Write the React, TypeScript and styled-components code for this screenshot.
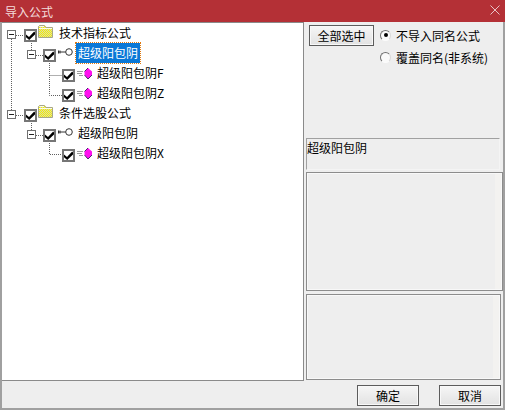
import React from 'react';
import styled, { createGlobalStyle } from 'styled-components';

const GlobalStyle = createGlobalStyle`
  html, body {
    margin: 0;
    padding: 0;
    width: 505px;
    height: 410px;
    overflow: hidden;
    background: #eeeeee;
    font-family: "Noto Sans CJK SC", "Liberation Sans", sans-serif;
    font-size: 12px;
    color: #000;
  }
`;

const Window = styled.div`
  width: 505px;
  height: 410px;
  display: flex;
  flex-direction: column;
  box-sizing: border-box;
  border-left: 2px solid #a0a0a0;
  border-right: 2px solid #a0a0a0;
  border-bottom: 2px solid #a0a0a0;
  background: #eeeeee;
`;

const TitleBar = styled.div`
  height: 22px;
  margin: 0 -2px;
  padding: 0 5px;
  display: flex;
  align-items: center;
  justify-content: space-between;
  background: #b43036;
  color: #f3dcdc;
  font-size: 12px;
  flex: none;
`;

const CloseGlyph = styled.svg`
  margin-top: -2px;
`;

const Body = styled.div`
  flex: 1;
  display: flex;
  flex-direction: column;
  min-height: 0;
`;

const Main = styled.div`
  height: 359px;
  display: flex;
  gap: 2px;
  flex: none;
`;

const TreePanel = styled.div`
  position: relative;
  width: 302px;
  box-sizing: border-box;
  background: #ffffff;
  border: 1px solid #8a8a8a;
  border-left: none;
  padding-top: 3px;
  flex: none;
`;

const Lines = styled.svg`
  position: absolute;
  left: 0;
  top: 0;
  pointer-events: none;
`;

const Row = styled.div<{ $level: number }>`
  position: relative;
  height: 20px;
  display: flex;
  align-items: flex-start;
  padding-left: ${(p) => p.$level * 19 + 22}px;
`;

const Expander = styled.span<{ $level: number }>`
  position: absolute;
  left: ${(p) => p.$level * 20 + 5}px;
  top: 4px;
  width: 9px;
  height: 9px;
  box-sizing: border-box;
  border: 1px solid #707070;
  background: #fff;
  display: flex;
  align-items: center;
  justify-content: center;
  &::after {
    content: '';
    width: 5px;
    height: 1px;
    background: #222;
  }
`;

const Check = styled.span`
  width: 13px;
  height: 13px;
  margin-top: 3px;
  box-sizing: border-box;
  border: 2px solid #767676;
  background: #fff;
  display: flex;
  align-items: center;
  justify-content: center;
  flex: none;
`;

const FolderSvg = styled.svg`
  flex: none;
  margin-left: 1px;
  margin-top: -1px;
`;

const KeySvg = styled.svg`
  flex: none;
  margin-left: 2px;
  margin-top: 2px;
`;

const FormulaSvg = styled.svg`
  flex: none;
  margin-left: 2px;
  margin-top: 2px;
`;

const Label = styled.span<{ $selected?: boolean; $gap: number }>`
  margin-left: ${(p) => p.$gap}px;
  margin-top: -3px;
  padding: 0 2px;
  height: 20px;
  line-height: 19px;
  box-sizing: border-box;
  white-space: nowrap;
  ${(p) =>
    p.$selected
      ? `background: #0a78d7; color: #fff; outline: 1px dotted #e07a10; outline-offset: 0;`
      : ''}
`;

const Side = styled.div`
  flex: 1;
  display: flex;
  flex-direction: column;
  min-width: 0;
`;

const TopControls = styled.div`
  height: 116px;
  padding: 3px 0 0 3px;
  box-sizing: border-box;
  display: flex;
  gap: 6px;
  flex: none;
`;

const PushButton = styled.button<{ $w: number }>`
  width: ${(p) => p.$w}px;
  height: 21px;
  padding: 0;
  box-sizing: border-box;
  border: 1px solid #5c5c5c;
  box-shadow: inset 0 0 0 1px #f8f8f8;
  background: linear-gradient(#f6f6f6, #e2e2e2);
  font: inherit;
  color: #000;
  flex: none;
`;

const RadioGroup = styled.div`
  display: flex;
  flex-direction: column;
  gap: 2px;
`;

const RadioRow = styled.div`
  height: 20px;
  display: flex;
  align-items: center;
  gap: 5px;
  white-space: nowrap;
`;

const RadioDot = styled.span<{ $on?: boolean }>`
  width: 11px;
  height: 11px;
  border-radius: 50%;
  box-sizing: border-box;
  border: 1px solid;
  border-color: #707070 #d8d8d8 #fbfbfb #707070;
  background: #fafafa;
  display: flex;
  align-items: center;
  justify-content: center;
  &::after {
    content: '';
    width: 4px;
    height: 4px;
    border-radius: 50%;
    background: ${(p) => (p.$on ? '#000' : 'transparent')};
  }
`;

const NamePanel = styled.div`
  height: 32px;
  margin-right: 3px;
  box-sizing: border-box;
  border: 1px solid #a0a0a0;
  border-bottom-color: #f4f4f4;
  border-right-color: #f4f4f4;
  line-height: 18px;
  flex: none;
`;

const GroupPanel = styled.div<{ $h: number; $mt: number; $mr: number }>`
  height: ${(p) => p.$h}px;
  margin-top: ${(p) => p.$mt}px;
  margin-right: ${(p) => p.$mr}px;
  box-sizing: border-box;
  border: 1px solid #8c8c8c;
  box-shadow: inset 0 0 0 1px #f8f8f8;
  background: linear-gradient(90deg, #eeeeee 0 96.5%, #f3f2f0 96.5%);
  flex: none;
`;

const Footer = styled.div`
  flex: 1;
  display: flex;
  justify-content: flex-end;
  align-items: flex-start;
  gap: 20px;
  padding: 4px 2px 0 0;
`;

const CheckMark = () => (
  <svg width="9" height="9" viewBox="0 0 9 9">
    <path d="M0 3.6 L3 6 L8.2 0.6 L9 1.4 V3.4 L3.2 9 L0 6.2 Z" fill="#000" />
  </svg>
);

const FolderIcon = () => (
  <FolderSvg width="15" height="13" viewBox="0 0 15 13">
    <defs>
      <pattern id="dither" width="2" height="2" patternUnits="userSpaceOnUse">
        <rect width="2" height="2" fill="#f6f000" />
        <rect width="1" height="1" fill="#d8d8b0" />
        <rect x="1" y="1" width="1" height="1" fill="#d8d8b0" />
      </pattern>
    </defs>
    <path d="M0.5 12.5 V1.5 L1.5 0.5 H6.5 L8 2.5 H14.5 V12.5 Z" fill="url(#dither)" stroke="#a8a888" />
    <path d="M1.5 1.5 H6 M1 3.5 H14" stroke="#fdfde8" />
  </FolderSvg>
);

const KeyIcon = () => (
  <KeySvg width="15" height="8" viewBox="0 0 15 8">
    <path d="M0.5 2.5 V5.5 M2 2.5 V5.5 M1 4 H8" stroke="#333" strokeWidth="1" fill="none" />
    <circle cx="11" cy="4" r="3.3" fill="#fff" stroke="#333" />
  </KeySvg>
);

const FormulaIcon = () => (
  <FormulaSvg width="15" height="11" viewBox="0 0 15 11">
    <path d="M0 3.5 H6 M0 5.5 H5 M2 7.5 H6" stroke="#9a9a9a" strokeWidth="1" fill="none" />
    <path d="M11 0 L15 3.5 V7 L11 11 L7.5 7 V3.5 Z" fill="#ff10f0" />
    <path d="M7.5 7 L11 11 L15 7 M11 0 L7.5 3.5" stroke="#4a2a70" strokeWidth="1" fill="none" />
  </FormulaSvg>
);

type TreeNode = {
  level: number;
  kind: 'folder' | 'key' | 'formula';
  text: string;
  selected?: boolean;
};

const nodes: TreeNode[] = [
  { level: 0, kind: 'folder', text: '技术指标公式' },
  { level: 1, kind: 'key', text: '超级阳包阴', selected: true },
  { level: 2, kind: 'formula', text: '超级阳包阴F' },
  { level: 2, kind: 'formula', text: '超级阳包阴Z' },
  { level: 0, kind: 'folder', text: '条件选股公式' },
  { level: 1, kind: 'key', text: '超级阳包阴' },
  { level: 2, kind: 'formula', text: '超级阳包阴X' },
];

const gaps = { folder: 4, key: 3, formula: 3 };

const App: React.FC = () => {
  return (
    <>
      <GlobalStyle />
      <Window>
        <TitleBar>
          <span>导入公式</span>
          <CloseGlyph width="10" height="10" viewBox="0 0 10 10">
            <path d="M0.5 0.5 L9.5 9.5 M9.5 0.5 L0.5 9.5" stroke="#e8c4c6" strokeWidth="1" />
          </CloseGlyph>
        </TitleBar>
        <Body>
          <Main>
            <TreePanel>
              <Lines width="160" height="160">
                <path
                  d="M9.5 16 V87 M14 12.5 H22 M14 92.5 H22 M29.5 20 V28 M34 32.5 H41 M29.5 100 V108 M34 112.5 H41 M47.5 40 V72.5 H60 M47.5 52.5 H60 M47.5 120 V131.5 H60"
                  stroke="#606060"
                  strokeDasharray="1 1"
                  fill="none"
                />
              </Lines>
              {nodes.map((node) => (
                <Row key={node.text + node.level + node.kind} $level={node.level}>
                  {node.level < 2 && <Expander $level={node.level} />}
                  <Check>
                    <CheckMark />
                  </Check>
                  {node.kind === 'folder' && <FolderIcon />}
                  {node.kind === 'key' && <KeyIcon />}
                  {node.kind === 'formula' && <FormulaIcon />}
                  <Label $selected={node.selected} $gap={gaps[node.kind]}>
                    {node.text}
                  </Label>
                </Row>
              ))}
            </TreePanel>
            <Side>
              <TopControls>
                <PushButton $w={65}>全部选中</PushButton>
                <RadioGroup>
                  <RadioRow>
                    <RadioDot $on />
                    不导入同名公式
                  </RadioRow>
                  <RadioRow>
                    <RadioDot />
                    覆盖同名(非系统)
                  </RadioRow>
                </RadioGroup>
              </TopControls>
              <NamePanel>超级阳包阴</NamePanel>
              <GroupPanel $h={119} $mt={2} $mr={0} />
              <GroupPanel $h={86} $mt={3} $mr={2} />
            </Side>
          </Main>
          <Footer>
            <PushButton $w={62}>确定</PushButton>
            <PushButton $w={62}>取消</PushButton>
          </Footer>
        </Body>
      </Window>
    </>
  );
};

export default App;
